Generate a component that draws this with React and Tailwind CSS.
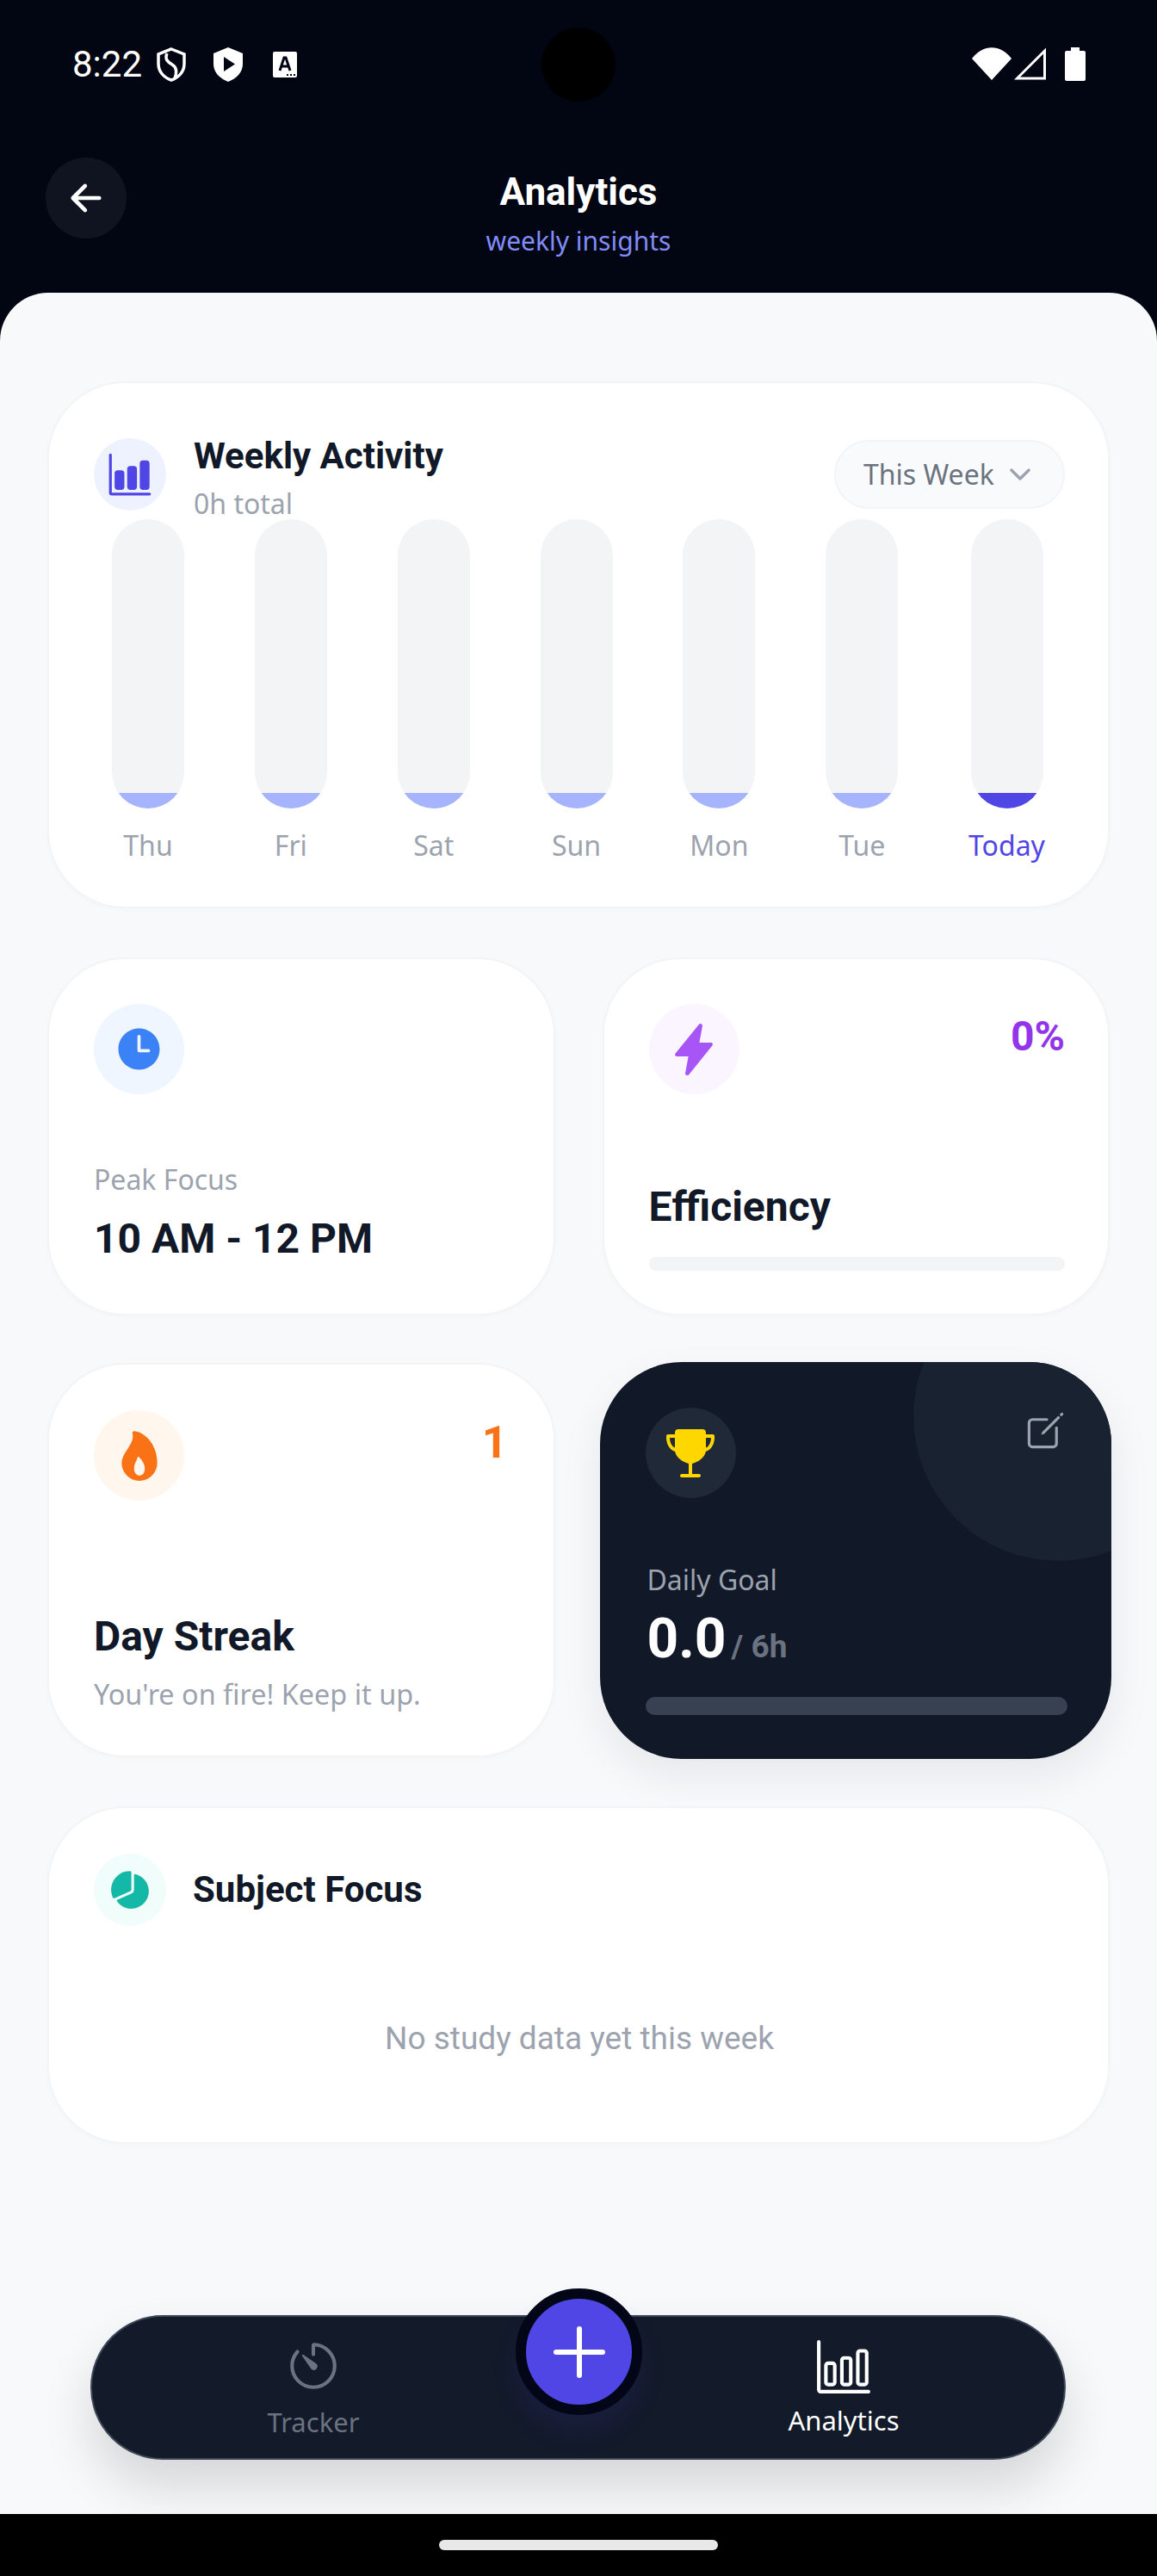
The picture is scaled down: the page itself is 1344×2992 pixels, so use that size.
import {
  IoAdd,
  IoArrowBack,
  IoBarChart,
  IoBarChartOutline,
  IoChevronDown,
  IoCreateOutline,
  IoFlame,
  IoFlash,
  IoPieChart,
  IoTime,
  IoTimerOutline,
  IoTrophy,
} from 'react-icons/io5';

const days = [
  { label: 'Thu' },
  { label: 'Fri' },
  { label: 'Sat' },
  { label: 'Sun' },
  { label: 'Mon' },
  { label: 'Tue' },
  { label: 'Today', today: true },
];

function StatusBar() {
  return (
    <div className="relative flex h-[150px] items-start pl-[84px] pr-[83px] pt-[55px] text-white">
      <span className="w-[98px] font-['Roboto',sans-serif] text-[42px] leading-[40px]">8:22</span>
      <svg viewBox="0 0 34 40" className="h-[40px] w-[34px]" fill="none" stroke="currentColor" strokeWidth="3.5">
        <path d="M17 2 L32 8 V19 C32 28 26 35 17 38 C8 35 2 28 2 19 V8 Z" />
        <path d="M12 7 C9 14 13 17 18 20 C23 23 24 28 21 36" />
      </svg>
      <svg viewBox="0 0 34 40" className="ml-[32px] h-[40px] w-[34px]">
        <path fill="currentColor" d="M17 0 L34 7 V19 C34 29 27 36 17 40 C7 36 0 29 0 19 V7 Z" />
        <path fill="#020512" d="M12 11 L25 19.5 L12 28 Z" />
      </svg>
      <svg viewBox="0 0 28 30" className="ml-[35px] mt-[5px] h-[30px] w-[28px]">
        <rect width="28" height="30" rx="2" fill="currentColor" />
        <path d="M8 22 L13 7 H15 L20 22 M10 17 H18" fill="none" stroke="#020512" strokeWidth="3" />
        <path d="M16 27 h2 M20 27 h2 M24 27 h2" stroke="#020512" strokeWidth="2" />
      </svg>
      <div className="absolute left-[629px] top-[32px] h-[86px] w-[86px] rounded-full bg-black" />
      <div className="ml-auto flex items-start">
        <svg viewBox="0 0 46 38" className="h-[38px] w-[46px]">
          <path fill="currentColor" d="M0 13 C13 -4 33 -4 46 13 L23 38 Z" />
        </svg>
        <svg viewBox="0 0 38 38" className="ml-[3px] h-[38px] w-[38px]" fill="none" stroke="currentColor" strokeWidth="3">
          <path d="M35.5 4 V36 H3.5 Z" />
        </svg>
        <svg viewBox="0 0 24 39" className="ml-[21px] h-[39px] w-[24px]">
          <path fill="currentColor" d="M7 0 H17 V4 H22 Q24 4 24 6 V37 Q24 39 22 39 H2 Q0 39 0 37 V6 Q0 4 2 4 H7 Z" />
        </svg>
      </div>
    </div>
  );
}

function Header() {
  return (
    <div className="relative h-[190px]">
      <div className="absolute left-[53px] top-[33px] flex h-[94px] w-[94px] items-center justify-center rounded-full bg-[#0f1420] text-white">
        <IoArrowBack size={50} />
      </div>
      <div className="flex flex-col items-center pt-[48px]">
        <h1 className="font-['Roboto',sans-serif] text-[44px] font-bold leading-[50px] text-white">Analytics</h1>
        <p className="mt-[12px] font-['Noto_Sans',sans-serif] text-[30px] leading-[40px] text-[#818cf8]">weekly insights</p>
      </div>
    </div>
  );
}

function Card({ className, children }) {
  return (
    <div className={`rounded-[90px] border-2 border-[#f3f4f6] bg-white shadow-[0_2px_6px_rgba(0,0,0,0.02)] ${className}`}>
      {children}
    </div>
  );
}

function IconCircle({ className, children }) {
  return <div className={`flex items-center justify-center rounded-full ${className}`}>{children}</div>;
}

function WeeklyActivity() {
  return (
    <Card className="h-[612px] pl-[52px] pr-[50px] pt-[64px]">
      <div className="flex h-[84px] items-start">
        <IconCircle className="h-[84px] w-[84px] bg-[#eef2ff] text-[#4f46e5]">
          <IoBarChart size={52} />
        </IconCircle>
        <div className="-mt-[3px] ml-[32px]">
          <h2 className="font-['Roboto',sans-serif] text-[42px] font-bold leading-[48px] text-[#111827]">Weekly Activity</h2>
          <p className="mt-[11px] font-['Noto_Sans',sans-serif] text-[32px] leading-[40px] text-[#9ca3af]">0h total</p>
        </div>
        <div className="ml-auto mt-[2px] flex h-[80px] w-[268px] items-center rounded-full border-2 border-[#f3f4f6] bg-[#f9fafb] pl-[32px]">
          <span className="font-['Noto_Sans',sans-serif] text-[32px] leading-[40px] text-[#6b7280]">This Week</span>
          <IoChevronDown size={36} className="ml-[12px] text-[#9ca3af]" />
        </div>
      </div>
      <div className="ml-[21px] mr-[23px] mt-[10px] flex justify-between">
        {days.map((day) => (
          <div key={day.label} className="flex flex-col items-center">
            <div className="flex h-[336px] w-[84px] items-end overflow-hidden rounded-[42px] bg-[#f3f4f6]">
              <div className={`h-[18px] w-full ${day.today ? 'bg-[#4f46e5]' : 'bg-[#a5b4fc]'}`} />
            </div>
            <span className={`mt-[21px] font-['Noto_Sans',sans-serif] text-[32px] leading-[44px] ${day.today ? 'text-[#4f46e5]' : 'text-[#9ca3af]'}`}>
              {day.label}
            </span>
          </div>
        ))}
      </div>
    </Card>
  );
}

function PeakFocus() {
  return (
    <Card className="h-[416px] pl-[52px] pt-[52px]">
      <IconCircle className="h-[105px] w-[105px] bg-[#eff6ff] text-[#3b82f6]">
        <IoTime size={59} />
      </IconCircle>
      <p className="mt-[77px] font-['Noto_Sans',sans-serif] text-[32px] leading-[44px] text-[#9ca3af]">Peak Focus</p>
      <p className="mt-[19px] font-['Roboto',sans-serif] text-[48px] font-bold leading-[56px] text-[#111827]">10 AM - 12 PM</p>
    </Card>
  );
}

function Efficiency() {
  return (
    <Card className="h-[416px] pl-[52px] pr-[50px] pt-[52px]">
      <div className="flex h-[105px] items-start justify-between">
        <IconCircle className="h-[105px] w-[105px] bg-[#faf5ff] text-[#a855f7]">
          <IoFlash size={64} />
        </IconCircle>
        <span className="mt-[10px] font-['Roboto',sans-serif] text-[48px] font-bold leading-[56px] text-[#9333ea]">0%</span>
      </div>
      <p className="mt-[103px] font-['Roboto',sans-serif] text-[48px] font-bold leading-[56px] text-[#111827]">Efficiency</p>
      <div className="mt-[30px] h-[16px] rounded-full bg-[#f3f4f6]" />
    </Card>
  );
}

function DayStreak() {
  return (
    <Card className="h-[458px] pl-[52px] pr-[53px] pt-[53px]">
      <div className="flex h-[105px] items-start justify-between">
        <IconCircle className="h-[105px] w-[105px] bg-[#fff7ed] text-[#f97316]">
          <IoFlame size={66} />
        </IconCircle>
        <span className="mt-[8px] font-['Roboto',sans-serif] text-[52px] font-bold leading-[60px] text-[#f97316]">1</span>
      </div>
      <p className="mt-[130px] font-['Roboto',sans-serif] text-[48px] font-bold leading-[56px] text-[#111827]">Day Streak</p>
      <p className="mt-[16px] font-['Noto_Sans',sans-serif] text-[32.4px] leading-[44px] text-[#9ca3af]">You're on fire! Keep it up.</p>
    </Card>
  );
}

function DailyGoal() {
  return (
    <div className="relative -my-[1px] -ml-[3px] -mr-[2px] h-[461px] overflow-hidden rounded-[95px] bg-[#111827] pl-[53px] pr-[51px] pt-[53px] shadow-[0_20px_50px_rgba(17,24,39,0.08)]">
      <div className="absolute left-[364px] top-[-105px] h-[336px] w-[336px] rounded-full bg-[#182230]" />
      <div className="relative flex h-[105px] items-start justify-between">
        <IconCircle className="h-[105px] w-[105px] bg-[#1f2937] text-[#ffd700]">
          <IoTrophy size={64} />
        </IconCircle>
        <IoCreateOutline size={51} className="mt-[1px] text-[#9ca3af]" />
      </div>
      <p className="relative ml-[2px] mt-[73px] font-['Noto_Sans',sans-serif] text-[32px] leading-[44px] text-[#9ca3af]">Daily Goal</p>
      <div className="relative ml-[2px] mt-[11px] flex items-baseline">
        <span className="font-['Roboto',sans-serif] text-[64px] font-bold leading-[72px] text-white">0.0</span>
        <span className="ml-[6px] font-['Roboto',sans-serif] text-[37px] font-bold leading-[48px] text-[#6b7280]">/ 6h</span>
      </div>
      <div className="relative mt-[31px] h-[21px] rounded-full bg-[#374151]" />
    </div>
  );
}

function SubjectFocus() {
  return (
    <Card className="h-[392px] pl-[52px] pr-[50px] pt-[53px]">
      <div className="flex items-center">
        <IconCircle className="h-[84px] w-[84px] bg-[#f0fdfa] text-[#14b8a6]">
          <IoPieChart size={50} />
        </IconCircle>
        <h2 className="ml-[31px] font-['Roboto',sans-serif] text-[42px] font-bold leading-[48px] text-[#111827]">Subject Focus</h2>
      </div>
      <p className="mt-[109px] text-center font-['Roboto',sans-serif] text-[37px] leading-[44px] text-[#9ca3af]">No study data yet this week</p>
    </Card>
  );
}

function BottomNav() {
  return (
    <div className="absolute bottom-[63px] left-[105px] flex h-[168px] w-[1133px] rounded-full border-2 border-[#3d4757] bg-[#131a2a] shadow-[0_32px_60px_rgba(0,0,0,0.14)]">
      <div className="ml-[161px] flex w-[192px] flex-col items-center pt-[24px] text-[#6b7280]">
        <IoTimerOutline size={66} />
        <span className="mt-[12px] font-['Noto_Sans',sans-serif] text-[31px] leading-[40px]">Tracker</span>
      </div>
      <div className="ml-[424px] flex w-[192px] flex-col items-center pt-[25px] text-white">
        <IoBarChartOutline size={66} />
        <span className="mt-[9px] font-['Noto_Sans',sans-serif] text-[31px] leading-[40px]">Analytics</span>
      </div>
      <div className="absolute left-[492px] top-[-33px] flex h-[147px] w-[147px] items-center justify-center rounded-full border-[12px] border-[#020617] bg-[#4f46e5] text-white shadow-[0_20px_30px_rgba(79,70,229,0.1)]">
        <IoAdd size={96} />
      </div>
    </div>
  );
}

export default function App() {
  return (
    <div className="flex h-[2992px] w-[1344px] flex-col overflow-hidden bg-[#020512]">
      <StatusBar />
      <Header />
      <main className="relative flex-1 overflow-hidden rounded-t-[56px] bg-[#f8f9fb] px-[55px] pt-[103px]">
        <WeeklyActivity />
        <div className="mt-[57px] grid grid-cols-2 gap-x-[55px] gap-y-[55px]">
          <PeakFocus />
          <Efficiency />
          <DayStreak />
          <DailyGoal />
        </div>
        <div className="mt-[56px]">
          <SubjectFocus />
        </div>
        <BottomNav />
      </main>
      <div className="flex h-[72px] items-start justify-center bg-black pt-[30px]">
        <div className="h-[12px] w-[324px] rounded-full bg-[#e8e8e8]" />
      </div>
    </div>
  );
}
